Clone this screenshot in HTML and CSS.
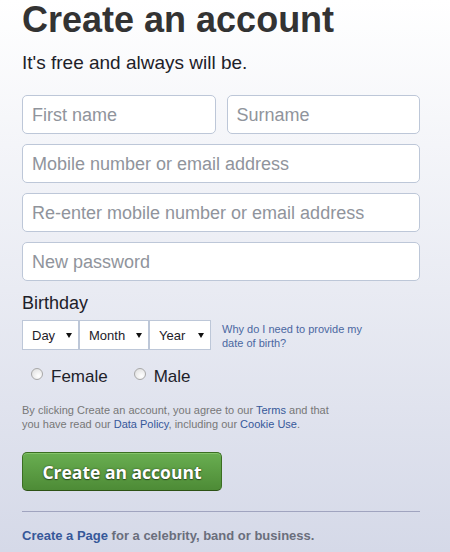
FILE: index.html
```html
<!DOCTYPE html>
<html lang="en">
<head>
    <meta charset="UTF-8">
    <meta name="viewport" content="width=device-width, initial-scale=1.0">
    <title>Create an account</title>
    <link rel="stylesheet" href="styles.css">
</head>
<body>
    <form class="signup">
        <h1>Create an account</h1>
        <p class="tagline">It's free and always will be.</p>

        <div class="fields">
            <div class="name-row">
                <input type="text" placeholder="First name">
                <input type="text" placeholder="Surname">
            </div>
            <input type="text" placeholder="Mobile number or email address">
            <input type="text" placeholder="Re-enter mobile number or email address">
            <input type="password" placeholder="New password">
        </div>

        <div class="birthday-label">Birthday</div>
        <div class="birthday">
            <div class="pickers">
                <span class="pick day"><select><option>Day</option></select></span>
                <span class="pick month"><select><option>Month</option></select></span>
                <span class="pick year"><select><option>Year</option></select></span>
            </div>
            <a class="why" href="#">Why do I need to provide my date of birth?</a>
        </div>

        <div class="gender">
            <label><span class="radio"></span>Female</label>
            <label><span class="radio"></span>Male</label>
        </div>

        <p class="terms">By clicking Create an account, you agree to our <a href="#">Terms</a> and that<br>you have read our <a href="#">Data Policy</a>, including our <a href="#">Cookie Use</a>.</p>

        <button type="button" class="submit">Create an account</button>

        <hr>

        <p class="page-link"><a href="#">Create a Page</a> for a celebrity, band or business.</p>
    </form>
</body>
</html>
```

FILE: styles.css
```css
html {
    height: 100%;
}
body {
    font-family: "Liberation Sans", Arial, sans-serif;
    color: #333;
    margin: 0;
    padding: 0 22px;
    min-height: 100%;
    background: linear-gradient(#ffffff, #d5d9e8);
}
.signup {
    width: 398px;
}
h1 {
    margin: 0;
    font-size: 36px;
    line-height: 40px;
    font-weight: bold;
    color: #333;
}
.tagline {
    margin: 11px 0 0;
    font-size: 19px;
    line-height: 24px;
    color: #1d2129;
}
.fields {
    margin-top: 20px;
    display: flex;
    flex-direction: column;
    gap: 10px;
}
.name-row {
    display: flex;
    gap: 11px;
}
.name-row input {
    flex: 1;
    min-width: 0;
}
input {
    box-sizing: border-box;
    height: 39px;
    width: 100%;
    margin: 0;
    padding: 1px 9px 0;
    font-family: inherit;
    font-size: 18px;
    color: #1d2129;
    background: #fff;
    border: 1px solid #bdc7d8;
    border-radius: 5px;
}
input::placeholder {
    color: #90949c;
}
.birthday-label {
    margin-top: 11px;
    font-size: 18px;
    line-height: 22px;
    color: #1d2129;
}
.birthday {
    margin-top: 6px;
    display: flex;
    align-items: flex-start;
    gap: 11px;
}
.pickers {
    display: flex;
}
.pick {
    position: relative;
    display: block;
}
.pick select {
    appearance: none;
    -webkit-appearance: none;
    box-sizing: border-box;
    height: 30px;
    margin: 0;
    padding: 0 0 0 9px;
    font-family: inherit;
    font-size: 13px;
    color: #1d2129;
    background: #fff;
    border: 1px solid #bdc7d8;
    border-radius: 0;
}
.pick::after {
    content: "";
    position: absolute;
    right: 7px;
    top: 13px;
    border-left: 3.5px solid transparent;
    border-right: 3.5px solid transparent;
    border-top: 5px solid #111;
    pointer-events: none;
}
.day select {
    width: 57px;
}
.month select {
    width: 70px;
}
.year select {
    width: 62px;
}
.why {
    width: 150px;
    margin-top: 2px;
    font-size: 11px;
    line-height: 14px;
    color: #4b67a1;
    text-decoration: none;
}
.gender {
    margin-top: 17px;
    padding-left: 9px;
    display: flex;
    gap: 26px;
    font-size: 17px;
    line-height: 20px;
    color: #1d2129;
}
.gender label {
    display: flex;
    align-items: flex-start;
    gap: 8px;
}
.radio {
    box-sizing: border-box;
    width: 12px;
    height: 12px;
    margin-top: 1px;
    border: 1px solid #a8a8a8;
    border-radius: 50%;
    background: radial-gradient(circle at 65% 70%, #ffffff, #dcdcdc);
}
.terms {
    margin: 16px 0 0;
    font-size: 11px;
    line-height: 14px;
    color: #777;
}
.terms a,
.page-link a {
    color: #365899;
    text-decoration: none;
}
.submit {
    margin-top: 21px;
    box-sizing: border-box;
    width: 200px;
    height: 39px;
    padding: 0;
    font-family: "Open Sans", "Liberation Sans", sans-serif;
    font-size: 17.5px;
    font-weight: bold;
    color: #fff;
    text-shadow: 0 0 2px rgba(0, 0, 0, 0.55), 0 1px 1px rgba(0, 0, 0, 0.4);
    background: linear-gradient(#69ae51, #4d8b36);
    border: 1px solid #3b6e22;
    border-bottom-color: #2c5115;
    border-radius: 5px;
    box-shadow: inset 0 1px 0 #84c46b;
    cursor: pointer;
    display: block;
}
hr {
    margin: 20px 0 0;
    border: 0;
    border-top: 1px solid #a0a4bf;
    height: 0;
}
.page-link {
    margin: 16px 0 0;
    font-size: 13px;
    line-height: 16px;
    font-weight: bold;
    color: #6a6e7c;
}
```
